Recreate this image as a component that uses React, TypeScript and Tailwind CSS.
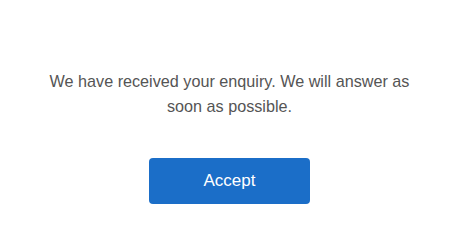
export default function App() {
  return (
    <div className="w-[459px] h-[226px] bg-white flex flex-col items-center pt-[69px] font-['Liberation_Sans',Arial,sans-serif]">
      <p className="w-[380px] text-center text-[16.2px] leading-[25px] text-[#555]">
        We have received your enquiry. We will answer as soon as possible.
      </p>
      <button className="mt-[39px] w-[161px] h-[46px] rounded-[4px] bg-[#1b6ec8] text-white text-[17px]">
        Accept
      </button>
    </div>
  );
}
